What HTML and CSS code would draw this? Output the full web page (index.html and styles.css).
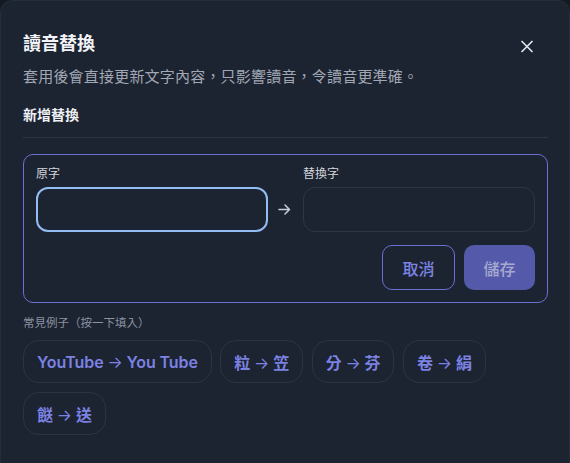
FILE: index.html
```html
<!DOCTYPE html>
<html lang="zh-Hant">
<head>
<meta charset="utf-8">
<title>讀音替換</title>
<link rel="stylesheet" href="styles.css">
</head>
<body>
<div class="dialog">
  <div class="header">
    <h1 class="title">讀音替換</h1>
    <button class="close" aria-label="關閉">
      <svg width="12" height="13" viewBox="0 0 12 13"><path d="M1 1.5 L11 11.5 M11 1.5 L1 11.5" stroke="#dfe3ea" stroke-width="1.7" stroke-linecap="round" fill="none"/></svg>
    </button>
  </div>
  <p class="subtitle">套用後會直接更新文字內容，只影響讀音，令讀音更準確。</p>
  <h2 class="section">新增替換</h2>
  <div class="divider"></div>
  <div class="form">
    <div class="fields">
      <label class="label">原字</label>
      <span></span>
      <label class="label">替換字</label>
      <div class="input focused"></div>
      <div class="arrow">
        <svg width="13" height="11" viewBox="0 0 13 11"><path d="M1 5.5 H11.5 M7 1 L11.5 5.5 L7 10" stroke="#c9cdd5" stroke-width="1.5" fill="none" stroke-linecap="round" stroke-linejoin="round"/></svg>
      </div>
      <div class="input"></div>
    </div>
    <div class="actions">
      <button class="btn btn-outline">取消</button>
      <button class="btn btn-primary">儲存</button>
    </div>
  </div>
  <p class="hint">常見例子（按一下填入）</p>
  <div class="chips">
    <button class="chip">YouTube <span class="to">→</span> You Tube</button>
    <button class="chip">粒 <span class="to">→</span> 笠</button>
    <button class="chip">分 <span class="to">→</span> 芬</button>
    <button class="chip">卷 <span class="to">→</span> 絹</button>
    <button class="chip">餸 <span class="to">→</span> 送</button>
  </div>
</div>
</body>
</html>
```

FILE: styles.css
```css
* { box-sizing: border-box; }
html, body { margin: 0; padding: 0; }
body {
  background: #141922;
  font-family: Inter, "Noto Sans CJK TC", "Noto Sans", sans-serif;
  width: 570px;
  height: 463px;
  overflow: hidden;
}
.dialog {
  width: 570px;
  height: 480px;
  background: #1c2331;
  border: 1px solid #252c3a;
  border-radius: 12px;
  padding: 29px 21px 0 22px;
}
.header {
  display: flex;
  justify-content: space-between;
  align-items: flex-start;
}
.title {
  margin: 0;
  font-size: 18px;
  line-height: 27px;
  font-weight: 700;
  color: #f1f3f6;
}
.close {
  background: none;
  border: none;
  padding: 0;
  margin: 10px 15px 0 0;
  width: 12px;
  height: 13px;
  display: block;
}
.close svg { display: block; }
.subtitle {
  margin: 9px 0 0;
  font-size: 15px;
  line-height: 22px;
  letter-spacing: 0.2px;
  color: #a2a8b3;
}
.section {
  margin: 17px 0 0;
  font-size: 14px;
  line-height: 20px;
  font-weight: 700;
  color: #eef0f3;
}
.divider {
  margin-top: 12px;
  height: 1px;
  background: #2d3442;
}
.form {
  margin-top: 16px;
  border: 1px solid #6a71d2;
  border-radius: 10px;
  padding: 12px 12px 12px 12px;
}
.fields {
  display: grid;
  grid-template-columns: 1fr 35px 1fr;
  row-gap: 6px;
}
.label {
  font-size: 12px;
  line-height: 14px;
  color: #d3d6dc;
}
.input {
  height: 45px;
  border: 1px solid #2e3545;
  border-radius: 12px;
}
.input.focused {
  border: 2px solid #93bdf2;
}
.arrow {
  display: flex;
  align-items: center;
  justify-content: center;
  padding-right: 2px;
}
.arrow svg { display: block; }
.actions {
  display: flex;
  justify-content: flex-end;
  gap: 9px;
  margin-top: 13px;
}
.btn {
  height: 45px;
  border-radius: 10px;
  font-family: inherit;
  font-size: 16px;
  font-weight: 500;
  padding: 0;
}
.btn-outline {
  width: 73px;
  background: transparent;
  border: 1px solid #6a71d2;
  color: #7c83e3;
}
.btn-primary {
  width: 71px;
  background: #5459a9;
  border: none;
  color: #a6aad0;
}
.hint {
  margin: 12px 0 0;
  font-size: 11.5px;
  line-height: 16px;
  color: #8b92a0;
}
.chips {
  margin-top: 9px;
  display: flex;
  flex-wrap: wrap;
  gap: 9px 8.5px;
  width: 480px;
}
.chip {
  height: 43px;
  padding: 0 13px;
  background: transparent;
  border: 1px solid #2c3444;
  border-radius: 16px;
  font-family: inherit;
  font-size: 16px;
  font-weight: 600;
  letter-spacing: -0.1px;
  color: #7b82e2;
}
.to {
  font-weight: 400;
}
```
